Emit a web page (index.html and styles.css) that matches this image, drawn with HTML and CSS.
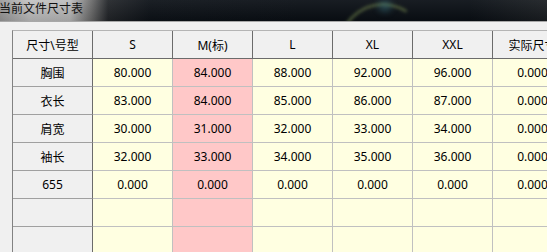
FILE: index.html
```html
<!DOCTYPE html>
<html lang="zh">
<head>
<meta charset="utf-8">
<title>当前文件尺寸表</title>
<link rel="stylesheet" href="styles.css">
</head>
<body>
<div class="window">
  <div class="titlebar">
    <span class="title">当前文件尺寸表</span>
    <span class="glow"></span>
    <span class="spot"></span>
  </div>
  <div class="content">
    <div class="grid">
      <div class="cell hd">尺寸\号型</div>
      <div class="cell hd">S</div>
      <div class="cell hd">M(标)</div>
      <div class="cell hd">L</div>
      <div class="cell hd">XL</div>
      <div class="cell hd">XXL</div>
      <div class="cell hd">实际尺寸</div>

      <div class="cell rh">胸围</div>
      <div class="cell d">80.000</div>
      <div class="cell d m">84.000</div>
      <div class="cell d">88.000</div>
      <div class="cell d">92.000</div>
      <div class="cell d">96.000</div>
      <div class="cell d">0.000</div>

      <div class="cell rh">衣长</div>
      <div class="cell d">83.000</div>
      <div class="cell d m">84.000</div>
      <div class="cell d">85.000</div>
      <div class="cell d">86.000</div>
      <div class="cell d">87.000</div>
      <div class="cell d">0.000</div>

      <div class="cell rh">肩宽</div>
      <div class="cell d">30.000</div>
      <div class="cell d m">31.000</div>
      <div class="cell d">32.000</div>
      <div class="cell d">33.000</div>
      <div class="cell d">34.000</div>
      <div class="cell d">0.000</div>

      <div class="cell rh">袖长</div>
      <div class="cell d">32.000</div>
      <div class="cell d m">33.000</div>
      <div class="cell d">34.000</div>
      <div class="cell d">35.000</div>
      <div class="cell d">36.000</div>
      <div class="cell d">0.000</div>

      <div class="cell rh">655</div>
      <div class="cell d">0.000</div>
      <div class="cell d m">0.000</div>
      <div class="cell d">0.000</div>
      <div class="cell d">0.000</div>
      <div class="cell d">0.000</div>
      <div class="cell d">0.000</div>

      <div class="cell rh"></div>
      <div class="cell d"></div>
      <div class="cell d m"></div>
      <div class="cell d"></div>
      <div class="cell d"></div>
      <div class="cell d"></div>
      <div class="cell d"></div>

      <div class="cell rh"></div>
      <div class="cell d"></div>
      <div class="cell d m"></div>
      <div class="cell d"></div>
      <div class="cell d"></div>
      <div class="cell d"></div>
      <div class="cell d"></div>

      <div class="cell rh"></div>
      <div class="cell d"></div>
      <div class="cell d m"></div>
      <div class="cell d"></div>
      <div class="cell d"></div>
      <div class="cell d"></div>
      <div class="cell d"></div>
    </div>
  </div>
</div>
</body>
</html>
```

FILE: styles.css
```css
html, body {
  margin: 0;
  padding: 0;
  background: #f0f0f0;
  overflow: hidden;
}

.window {
  width: 547px;
  height: 252px;
  overflow: hidden;
  background: #f0f0f0;
  font-family: "Noto Sans", "Noto Sans CJK SC", sans-serif;
  font-size: 12px;
  color: #000;
}

.titlebar {
  position: relative;
  height: 21px;
  overflow: hidden;
  border-bottom: 1px solid #a8a8a8;
  background:
    linear-gradient(to bottom, rgba(255,255,255,0.06), rgba(0,0,0,0.15)),
    linear-gradient(to right, #9c9c9c 0, #c4c4c4 30px, #bdbdbd 70px, #6a6a6a 92px, #23262a 108px, #0d1218 150px, #0a0f15 300px, #0a0f15 470px, #1b1f23 547px);
}

.title {
  display: block;
  margin-left: -1px;
  line-height: 16px;
  font-family: "Noto Sans CJK SC", sans-serif;
  font-size: 12px;
  color: #111;
  white-space: nowrap;
}

.glow {
  position: absolute;
  left: 338px;
  top: 3px;
  width: 90px;
  height: 90px;
  box-sizing: border-box;
  border-radius: 50%;
  border: 3px solid transparent;
  border-top-color: rgba(120, 140, 80, 0.5);
  border-left-color: rgba(110, 130, 70, 0.5);
  transform: rotate(-12deg);
  filter: blur(1.5px);
}

.spot {
  position: absolute;
  left: 378px;
  top: 0;
  width: 14px;
  height: 12px;
  border-radius: 50%;
  background: rgba(60, 120, 130, 0.45);
  filter: blur(3px);
}

.content {
  padding: 8px 0 0 12px;
}

.grid {
  display: grid;
  grid-template-columns: repeat(7, 80px);
  grid-auto-rows: 28px;
  border-left: 1px solid #828282;
  border-top: 1px solid #b4b4b4;
}

.cell {
  box-sizing: border-box;
  display: flex;
  align-items: center;
  justify-content: center;
  white-space: nowrap;
  overflow: hidden;
  font-family: "Noto Sans", "Noto Sans CJK SC", sans-serif;
  font-size: 12px;
  color: #000;
}

.hd {
  background: #f0f0f0;
  border-right: 1px solid #6b6b6b;
  border-bottom: 1px solid #6b6b6b;
}

.rh {
  background: #f0f0f0;
  border-right: 1px solid #6b6b6b;
  border-bottom: 1px solid #a0a0a0;
}

.d {
  background: #ffffe1;
  border-right: 1px solid #c0c0c0;
  border-bottom: 1px solid #c0c0c0;
}

.m {
  background: #ffc8c8;
}
```
